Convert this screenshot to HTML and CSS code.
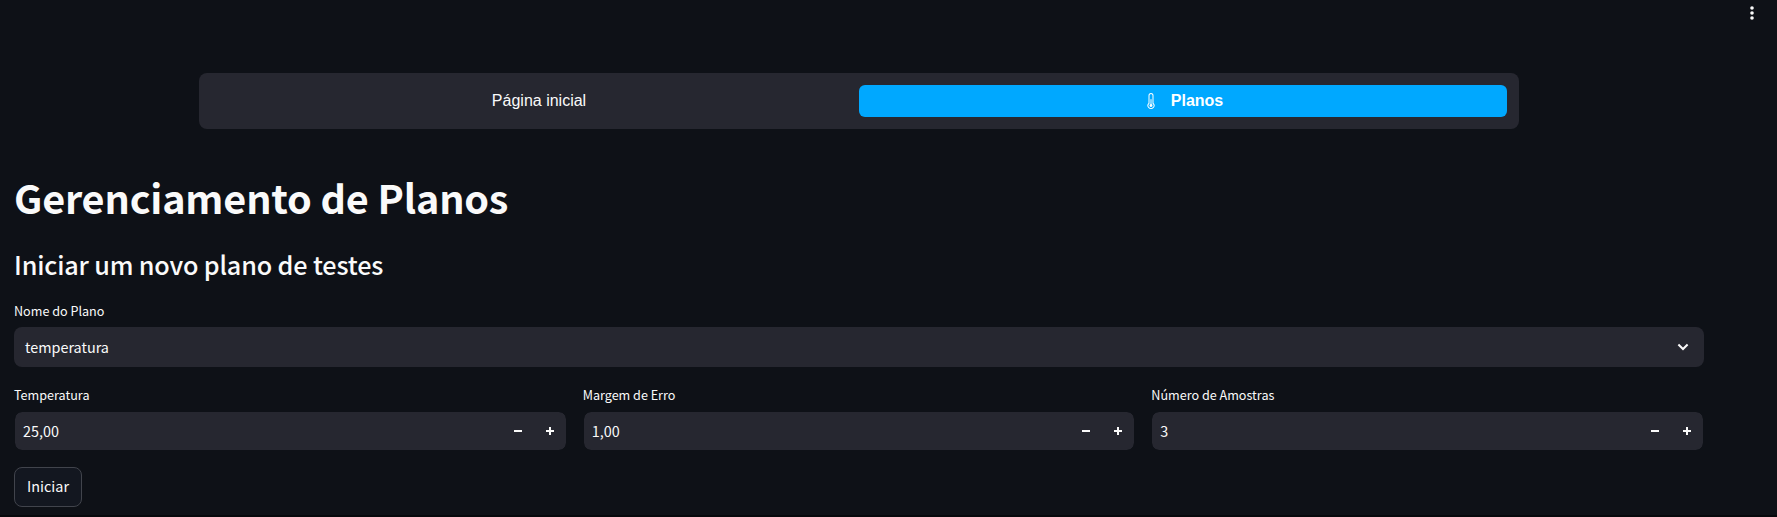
FILE: index.html
```html
<!DOCTYPE html>
<html lang="pt-BR">
<head>
<meta charset="utf-8">
<title>Gerenciamento de Planos</title>
<link rel="stylesheet" href="styles.css">
</head>
<body>
<header class="toolbar">
  <svg class="menu-icon" viewBox="0 0 16 16"><circle cx="8" cy="3" r="1.8"/><circle cx="8" cy="8" r="1.8"/><circle cx="8" cy="13" r="1.8"/></svg>
</header>
<main class="page">
  <nav class="tabs">
    <a class="tab tab-home">Página inicial</a>
    <a class="tab tab-active">
      <svg class="thermometer" viewBox="0 0 16 16"><path d="M9.5 12.5a1.5 1.5 0 1 1-2-1.415V6.5a.5.5 0 0 1 1 0v4.585a1.5 1.5 0 0 1 1 1.415"/><path d="M5.5 2.5a2.5 2.5 0 0 1 5 0v7.55a3.5 3.5 0 1 1-5 0zM8 1a1.5 1.5 0 0 0-1.5 1.5v7.987l-.167.15a2.5 2.5 0 1 0 3.333 0l-.166-.15V2.5A1.5 1.5 0 0 0 8 1"/></svg>
      <span>Planos</span>
    </a>
  </nav>
  <h1 class="title">Gerenciamento de Planos</h1>
  <h2 class="subtitle">Iniciar um novo plano de testes</h2>
  <div class="field">
    <label class="label">Nome do Plano</label>
    <div class="select">
      <span>temperatura</span>
      <svg class="chevron" viewBox="0 0 12 8"><path d="M1.4 1.5 6 6l4.6-4.5"/></svg>
    </div>
  </div>
  <div class="columns">
    <div class="field">
      <label class="label">Temperatura</label>
      <div class="number"><span class="value">25,00</span><svg class="step" viewBox="0 0 8 8"><path d="M0 3h8v2H0z"/></svg><svg class="step" viewBox="0 0 8 8"><path d="M0 3h3V0h2v3h3v2H5v3H3V5H0z"/></svg></div>
    </div>
    <div class="field">
      <label class="label">Margem de Erro</label>
      <div class="number"><span class="value">1,00</span><svg class="step" viewBox="0 0 8 8"><path d="M0 3h8v2H0z"/></svg><svg class="step" viewBox="0 0 8 8"><path d="M0 3h3V0h2v3h3v2H5v3H3V5H0z"/></svg></div>
    </div>
    <div class="field">
      <label class="label">Número de Amostras</label>
      <div class="number"><span class="value">3</span><svg class="step" viewBox="0 0 8 8"><path d="M0 3h8v2H0z"/></svg><svg class="step" viewBox="0 0 8 8"><path d="M0 3h3V0h2v3h3v2H5v3H3V5H0z"/></svg></div>
    </div>
  </div>
  <button class="start">Iniciar</button>
</main>
</body>
</html>
```
FILE: styles.css
```css
* { box-sizing: border-box; }
body {
  margin: 0;
  height: 517px;
  overflow: hidden;
  background: #0e1117;
  border-bottom: 2px solid #07080c;
  color: #fafafa;
  font-family: "Noto Sans CJK SC", "Noto Sans", sans-serif;
  font-size: 14.4px;
}
.toolbar {
  height: 73px;
  padding: 5px 17px 0 0;
  display: flex;
  justify-content: flex-end;
}
.menu-icon { width: 16px; height: 16px; fill: #fafafa; }
.page { width: 1690px; margin-left: 14px; }
.tabs {
  display: flex;
  width: 1320px;
  height: 56px;
  margin-left: 185px;
  padding: 12px;
  background: #262730;
  border-radius: 8px;
  font: 16px "Liberation Sans", Arial, sans-serif;
}
.tab {
  flex: 0 0 648px;
  display: flex;
  align-items: center;
  justify-content: center;
}
.tab-home { padding-left: 8px; }
.tab-active {
  background: #00a8ff;
  border-radius: 6px;
  color: #fff;
  font-weight: 700;
  gap: 12px;
}
.thermometer { width: 16px; height: 16px; fill: #fff; }
.title {
  margin: 41px 0 0;
  height: 53px;
  line-height: 53px;
  font-size: 39.6px;
  font-weight: 700;
  letter-spacing: -0.0045em;
}
.subtitle {
  margin: 24px 0 0;
  height: 34px;
  line-height: 34px;
  font-size: 25.2px;
  font-weight: 500;
  letter-spacing: -0.157px;
}
.field { min-width: 0; }
.subtitle + .field { margin-top: 19px; }
.label {
  display: block;
  height: 27px;
  line-height: 21px;
  font-size: 12.6px;
}
.select {
  display: flex;
  align-items: center;
  justify-content: space-between;
  height: 40px;
  padding: 0 15px 0 11px;
  background: #262730;
  border-radius: 8px;
}
.select span, .value { padding-bottom: 2px; }
.chevron { width: 12px; height: 8px; fill: none; stroke: #fafafa; stroke-width: 2; }
.columns {
  display: grid;
  grid-template-columns: repeat(3, 1fr);
  gap: 16px;
  margin-top: 17px;
}
.number {
  display: flex;
  align-items: center;
  gap: 24px;
  height: 40px;
  border: 1px solid #0e1117;
  border-radius: 8px;
  padding: 0 12px 0 8px;
  background: #262730;
  background-clip: padding-box;
}
.value { flex: 1; }
.step { width: 8px; height: 8px; fill: #fafafa; }
.start {
  display: block;
  width: 68px;
  height: 40px;
  margin-top: 16px;
  padding: 0 0 4px;
  border: 1px solid #41444c;
  border-radius: 8px;
  background: #131720;
  color: #fafafa;
  font: inherit;
}
```
